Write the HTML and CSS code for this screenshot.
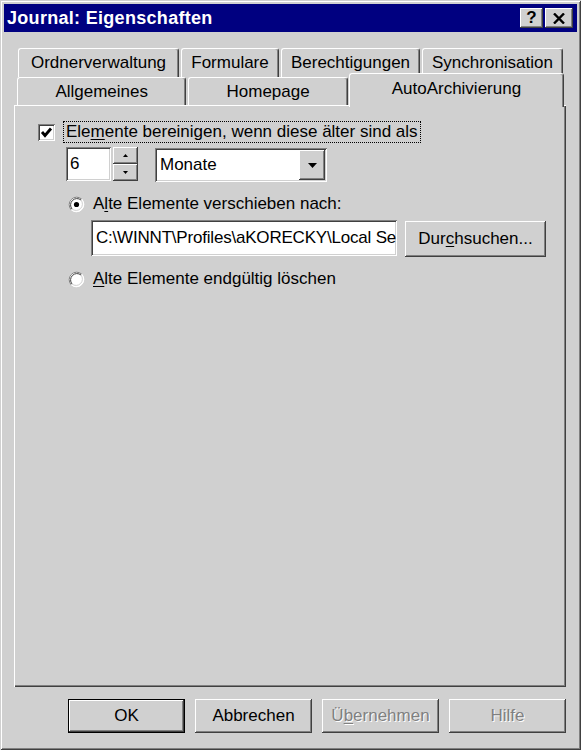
FILE: index.html
```html
<!DOCTYPE html>
<html lang="de">
<head>
    <meta charset="UTF-8">
    <meta name="viewport" content="width=device-width, initial-scale=1.0">
    <title>Journal: Eigenschaften</title>
    <link rel="stylesheet" href="styles.css">
</head>
<body>
    <div class="window">
        <!-- Titelleiste -->
        <div class="titlebar">
            <span class="title">Journal: Eigenschaften</span>
            <div class="caption-buttons">
                <span class="cap-btn help">?</span>
                <span class="cap-btn close">
                    <svg width="12" height="11" viewBox="0 0 12 11">
                        <path d="M1 0.5 L11 10.5 M11 0.5 L1 10.5" stroke="#000" stroke-width="2.4" fill="none"/>
                    </svg>
                </span>
            </div>
        </div>

        <div class="sheet">
            <!-- Registerkarten -->
            <div class="tabs">
                <div class="tab-row back">
                    <span class="tab w-ordner">Ordnerverwaltung</span>
                    <span class="tab w-formulare">Formulare</span>
                    <span class="tab w-rechte">Berechtigungen</span>
                    <span class="tab w-sync">Synchronisation</span>
                </div>
                <div class="tab-row front">
                    <span class="tab w-allg">Allgemeines</span>
                    <span class="tab w-home">Homepage</span>
                    <span class="tab selected">AutoArchivierung</span>
                </div>
            </div>

            <div class="panel">
                <div class="check-row">
                    <span class="checkbox">
                        <svg width="13" height="13" viewBox="0 0 13 13">
                            <path d="M2 6 L5 9.5 L11 2.5" stroke="#000" stroke-width="2.8" fill="none"/>
                        </svg>
                    </span>
                    <span class="focus">Ele<u>m</u>ente bereinigen, wenn diese älter sind als</span>
                </div>

                <div class="period-row">
                    <span class="field num">6</span>
                    <span class="spin">
                        <span class="spin-btn">
                            <svg width="5" height="3" viewBox="0 0 5 3"><path d="M2.5 0 L5 3 L0 3 Z" fill="#000"/></svg>
                        </span>
                        <span class="spin-btn">
                            <svg width="5" height="3" viewBox="0 0 5 3"><path d="M0 0 L5 0 L2.5 3 Z" fill="#000"/></svg>
                        </span>
                    </span>
                    <span class="combo">
                        <span class="combo-text">Monate</span>
                        <span class="combo-btn">
                            <svg width="9" height="5" viewBox="0 0 9 5"><path d="M0 0 L9 0 L4.5 5 Z" fill="#000"/></svg>
                        </span>
                    </span>
                </div>

                <div class="option-row first">
                    <svg class="radio" width="17" height="17" viewBox="0 0 17 17">
                        <circle cx="8.5" cy="8.5" r="7.5" fill="#fff"/>
                        <path d="M3.2 13.8 A7.5 7.5 0 0 1 13.8 3.2" stroke="#808080" fill="none"/>
                        <path d="M13.8 3.2 A7.5 7.5 0 0 1 3.2 13.8" stroke="#fff" fill="none"/>
                        <path d="M4 13 A6.4 6.4 0 0 1 13 4" stroke="#404040" fill="none"/>
                        <path d="M13 4 A6.4 6.4 0 0 1 4 13" stroke="#d0d0d0" fill="none"/>
                        <circle cx="8.5" cy="8.5" r="2.6" fill="#000"/>
                    </svg>
                    <span class="option-label">A<u>l</u>te Elemente verschieben nach:</span>
                </div>

                <div class="path-row">
                    <span class="field path">C:\WINNT\Profiles\aKORECKY\Local Se</span>
                    <span class="btn browse"><span>Dur<u>c</u>hsuchen...</span></span>
                </div>

                <div class="option-row">
                    <svg class="radio" width="17" height="17" viewBox="0 0 17 17">
                        <circle cx="8.5" cy="8.5" r="7.5" fill="#fff"/>
                        <path d="M3.2 13.8 A7.5 7.5 0 0 1 13.8 3.2" stroke="#808080" fill="none"/>
                        <path d="M13.8 3.2 A7.5 7.5 0 0 1 3.2 13.8" stroke="#fff" fill="none"/>
                        <path d="M4 13 A6.4 6.4 0 0 1 13 4" stroke="#404040" fill="none"/>
                        <path d="M13 4 A6.4 6.4 0 0 1 4 13" stroke="#d0d0d0" fill="none"/>
                    </svg>
                    <span class="option-label"><u>A</u>lte Elemente endgültig löschen</span>
                </div>
            </div>

            <!-- Dialogschaltflächen -->
            <div class="dialog-buttons">
                <span class="btn default"><span>OK</span></span>
                <span class="btn"><span>Abbrechen</span></span>
                <span class="btn disabled"><span>Ü<u>b</u>ernehmen</span></span>
                <span class="btn disabled"><span>Hilfe</span></span>
            </div>
        </div>
    </div>
</body>
</html>
```

FILE: styles.css
```css
body {
    margin: 0;
    background: #d0d0d0;
    font-family: "Liberation Sans", Arial, sans-serif;
    font-size: 17px;
    color: #000;
}

u {
    text-decoration-thickness: 1px;
    text-underline-offset: 2px;
}

.window {
    width: 581px;
    height: 750px;
    box-sizing: border-box;
    padding: 4px;
    display: flex;
    flex-direction: column;
    background: #d0d0d0;
    box-shadow: inset 1px 1px #d0d0d0, inset -1px -1px #404040,
                inset 2px 2px #fff, inset -2px -2px #808080;
}

/* Titelleiste */
.titlebar {
    height: 28px;
    flex-shrink: 0;
    display: flex;
    align-items: center;
    justify-content: space-between;
    background: #000080;
    color: #fff;
    padding: 0 4px 0 3px;
}

.title {
    font-weight: bold;
    font-size: 18px;
    letter-spacing: 0.3px;
}

.caption-buttons {
    display: flex;
    gap: 2px;
}

.cap-btn {
    width: 23px;
    height: 20px;
    box-sizing: border-box;
    display: flex;
    align-items: center;
    justify-content: center;
    background: #d0d0d0;
    color: #000;
    font-weight: bold;
    font-size: 17px;
    box-shadow: inset -1px -1px #404040, inset 1px 1px #fff,
                inset -2px -2px #808080, inset 2px 2px #d0d0d0;
}

.cap-btn.close {
    width: 28px;
}

/* Inhalt */
.sheet {
    flex: 1;
    display: flex;
    flex-direction: column;
    padding: 16px 11px 0 10px;
}

.tabs {
    height: 57px;
}

.tab-row {
    display: flex;
}

.tab-row.back {
    height: 29px;
    padding-left: 4px;
}

.tab-row.front {
    height: 28px;
    padding-left: 3px;
}

.tab {
    box-sizing: border-box;
    height: 100%;
    margin-right: 2px;
    background: #d0d0d0;
    border-top: 1px solid #fff;
    border-left: 1px solid #fff;
    border-right: 1px solid #404040;
    border-radius: 3px 3px 0 0;
    box-shadow: inset -1px 0 #808080;
    text-align: center;
    line-height: 28px;
    white-space: nowrap;
}

.w-ordner { width: 161px; }
.w-formulare { width: 98px; }
.w-rechte { width: 139px; }
.w-sync { width: 141px; }
.w-allg { width: 170px; }
.w-home { width: 160px; }

.tab.selected {
    position: relative;
    z-index: 1;
    width: 216px;
    height: 34px;
    margin-top: -4px;
    margin-left: -1px;
    line-height: 30px;
}

.panel {
    height: 582px;
    box-sizing: border-box;
    padding: 16px 0 0 24px;
    box-shadow: inset 1px 1px #fff, inset -1px -1px #404040, inset -2px -2px #808080;
}

.check-row {
    display: flex;
    align-items: center;
    height: 22px;
}

.checkbox {
    width: 17px;
    height: 17px;
    box-sizing: border-box;
    display: flex;
    align-items: center;
    justify-content: center;
    background: #fff;
    box-shadow: inset 1px 1px #808080, inset -1px -1px #fff,
                inset 2px 2px #404040, inset -2px -2px #d0d0d0;
}

.focus {
    margin-left: 8px;
    height: 22px;
    box-sizing: border-box;
    padding: 0 2px;
    border: 1px dotted #000;
    line-height: 20px;
    white-space: nowrap;
}

.period-row {
    display: flex;
    align-items: flex-start;
    margin-top: 4px;
    padding-left: 28px;
}

.field {
    box-sizing: border-box;
    background: #fff;
    white-space: nowrap;
    overflow: hidden;
    box-shadow: inset 1px 1px #808080, inset -1px -1px #fff,
                inset 2px 2px #404040, inset -2px -2px #d0d0d0;
}

.field.num {
    width: 45px;
    height: 34px;
    padding: 0 4px;
    line-height: 34px;
}

.spin {
    display: flex;
    flex-direction: column;
    margin-left: 2px;
}

.spin-btn {
    width: 25px;
    height: 17px;
    box-sizing: border-box;
    display: flex;
    align-items: center;
    justify-content: center;
    background: #d0d0d0;
    box-shadow: inset -1px -1px #404040, inset 1px 1px #fff,
                inset -2px -2px #808080, inset 2px 2px #d0d0d0;
}

.combo {
    width: 172px;
    height: 34px;
    margin-left: 17px;
    margin-top: 1px;
    box-sizing: border-box;
    padding: 2px;
    display: flex;
    background: #fff;
    box-shadow: inset 1px 1px #808080, inset -1px -1px #fff,
                inset 2px 2px #404040, inset -2px -2px #d0d0d0;
}

.combo-text {
    flex: 1;
    padding-left: 3px;
    line-height: 30px;
}

.combo-btn {
    width: 26px;
    display: flex;
    align-items: center;
    justify-content: center;
    background: #d0d0d0;
    box-shadow: inset -1px -1px #404040, inset 1px 1px #fff,
                inset -2px -2px #808080, inset 2px 2px #d0d0d0;
}

.option-row {
    display: flex;
    align-items: center;
    height: 20px;
    margin-top: 12px;
    padding-left: 30px;
}

.option-label {
    margin-left: 8px;
    white-space: nowrap;
}

.path-row {
    display: flex;
    margin-top: 6px;
    padding-left: 53px;
}

.field.path {
    width: 306px;
    height: 36px;
    padding: 0 3px 0 5px;
    line-height: 36px;
    letter-spacing: -0.2px;
}

.btn {
    width: 117px;
    height: 34px;
    box-sizing: border-box;
    display: flex;
    align-items: center;
    justify-content: center;
    background: #d0d0d0;
    white-space: nowrap;
    box-shadow: inset -1px -1px #404040, inset 1px 1px #fff,
                inset -2px -2px #808080, inset 2px 2px #d0d0d0;
}

.btn.browse {
    width: 141px;
    height: 36px;
    margin-left: 8px;
    margin-top: 1px;
}

.btn.default {
    border: 1px solid #000;
}

.btn.disabled {
    color: #808080;
    text-shadow: 1px 1px 0 #fff;
}

.dialog-buttons {
    display: flex;
    justify-content: flex-end;
    gap: 10px;
    margin-top: 12px;
}
```
